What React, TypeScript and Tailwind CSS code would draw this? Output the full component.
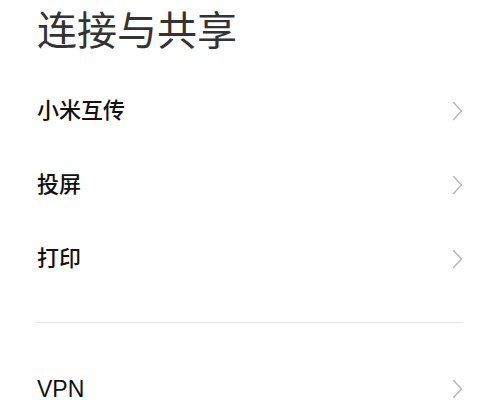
import React from 'react';

const items = ['小米互传', '投屏', '打印'];

function Chevron() {
  return (
    <svg width="11" height="20" viewBox="0 0 11 20" fill="none" className="text-[#b8b8b8]">
      <polyline points="1.5,1.5 9.5,10 1.5,18.5" stroke="currentColor" strokeWidth="1.5" strokeLinecap="round" strokeLinejoin="round" />
    </svg>
  );
}

function Row({ label, latin }: { label: string; latin?: boolean }) {
  return (
    <div className="h-[74px] flex items-center justify-between">
      <span className={latin ? 'text-[23px] leading-[28px] text-[#111]' : 'text-[22px] leading-[28px] font-medium text-[#111]'}>
        {label}
      </span>
      <Chevron />
    </div>
  );
}

export default function App() {
  return (
    <div
      className="w-[500px] h-[400px] overflow-hidden bg-white px-[37px]"
      style={{ fontFamily: '"Liberation Sans", "Noto Sans CJK SC", sans-serif' }}
    >
      <div className="h-[74px]">
        <h1 className="text-[40px] leading-[62px] font-normal text-[#333]">连接与共享</h1>
      </div>

      {items.map((label) => (
        <Row key={label} label={label} />
      ))}

      <div className="mt-[26px] mb-[29px] h-px bg-[#e6e6e6]" />

      <Row label="VPN" latin />
    </div>
  );
}
